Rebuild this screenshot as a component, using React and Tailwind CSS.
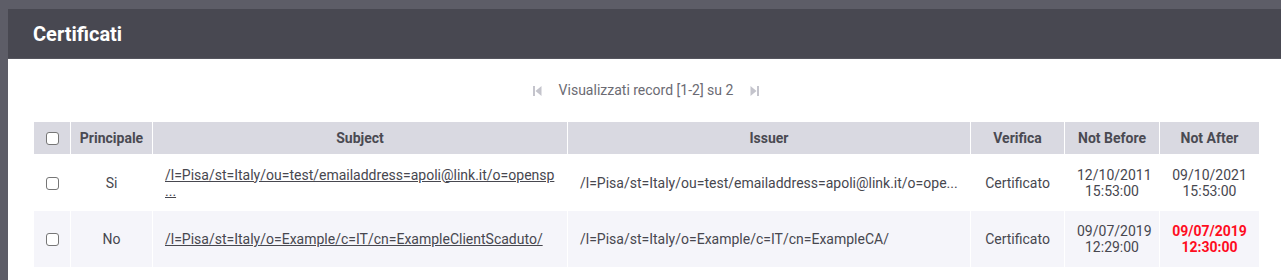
import React from "react";

const font = { fontFamily: "Roboto, 'Liberation Sans', sans-serif" };

function Box() {
  return (
    <span className="inline-block w-[13px] h-[13px] rounded-[3px] border border-[#767676] bg-white align-middle" />
  );
}

function SkipIcon({ dir }) {
  return (
    <svg width="10" height="12" viewBox="0 0 10 12" className={dir === "next" ? "rotate-180" : ""}>
      <rect x="1" y="1" width="2" height="10" fill="#c4c4cc" />
      <path d="M9.5 1 L3.5 6 L9.5 11 Z" fill="#c4c4cc" />
    </svg>
  );
}

export default function App() {
  const td = "border-x border-white px-3 py-3 leading-4";
  return (
    <div className="w-[1281px] h-[280px] bg-[#5d5d67] pt-[9px] pl-[8px] overflow-hidden" style={font}>
      <div className="h-[50px] bg-[#484851] flex items-center pl-[25px] border-b border-[#55555e]">
        <span className="text-white text-[20px] font-bold">Certificati</span>
      </div>
      <div className="bg-white h-[230px] pl-[25px] pr-[22px]">
        <div className="flex items-center justify-center h-[63px] text-[14px] text-[#6b6b73] gap-[17px]">
          <SkipIcon dir="prev" />
          <span>Visualizzati record [1-2] su 2</span>
          <SkipIcon dir="next" />
        </div>
        <table className="w-[1226px] table-fixed border-collapse text-[14px] text-[#47474f]">
          <colgroup>
            <col className="w-[37px]" />
            <col className="w-[82px]" />
            <col className="w-[415px]" />
            <col className="w-[403px]" />
            <col className="w-[94px]" />
            <col className="w-[95px]" />
            <col className="w-[100px]" />
          </colgroup>
          <thead>
            <tr className="bg-[#d9d9e1] h-[32px] text-[#4a4a52] font-bold">
              <th className="border-x border-white px-0 py-0 text-center"><Box /></th>
              <th className="border-x border-white px-0 text-center">Principale</th>
              <th className="border-x border-white text-center">Subject</th>
              <th className="border-x border-white text-center">Issuer</th>
              <th className="border-x border-white text-center">Verifica</th>
              <th className="border-x border-white text-center">Not Before</th>
              <th className="border-x border-white text-center">Not After</th>
            </tr>
          </thead>
          <tbody>
            <tr className="bg-white h-[57px]">
              <td className="border-x border-white text-center"><Box /></td>
              <td className={td + " text-center"}>Si</td>
              <td className={td}>
                <span className="underline">/l=Pisa/st=Italy/ou=test/emailaddress=apoli@link.it/o=opensp</span>
                <br />
                <span className="underline">...</span>
              </td>
              <td className={td + " whitespace-nowrap"}>/l=Pisa/st=Italy/ou=test/emailaddress=apoli@link.it/o=ope...</td>
              <td className={td + " text-center px-0"}>Certificato</td>
              <td className={td + " text-center px-0"}>12/10/2011<br />15:53:00</td>
              <td className={td + " text-center px-0"}>09/10/2021<br />15:53:00</td>
            </tr>
            <tr className="bg-[#f5f5fa] h-[56px]">
              <td className="border-x border-white text-center"><Box /></td>
              <td className={td + " text-center"}>No</td>
              <td className={td}>
                <span className="underline">/l=Pisa/st=Italy/o=Example/c=IT/cn=ExampleClientScaduto/</span>
              </td>
              <td className={td}>/l=Pisa/st=Italy/o=Example/c=IT/cn=ExampleCA/</td>
              <td className={td + " text-center px-0"}>Certificato</td>
              <td className={td + " text-center px-0"}>09/07/2019<br />12:29:00</td>
              <td className={td + " text-center px-0 text-[#ff0d1f] font-bold"}>09/07/2019<br />12:30:00</td>
            </tr>
          </tbody>
        </table>
      </div>
    </div>
  );
}
